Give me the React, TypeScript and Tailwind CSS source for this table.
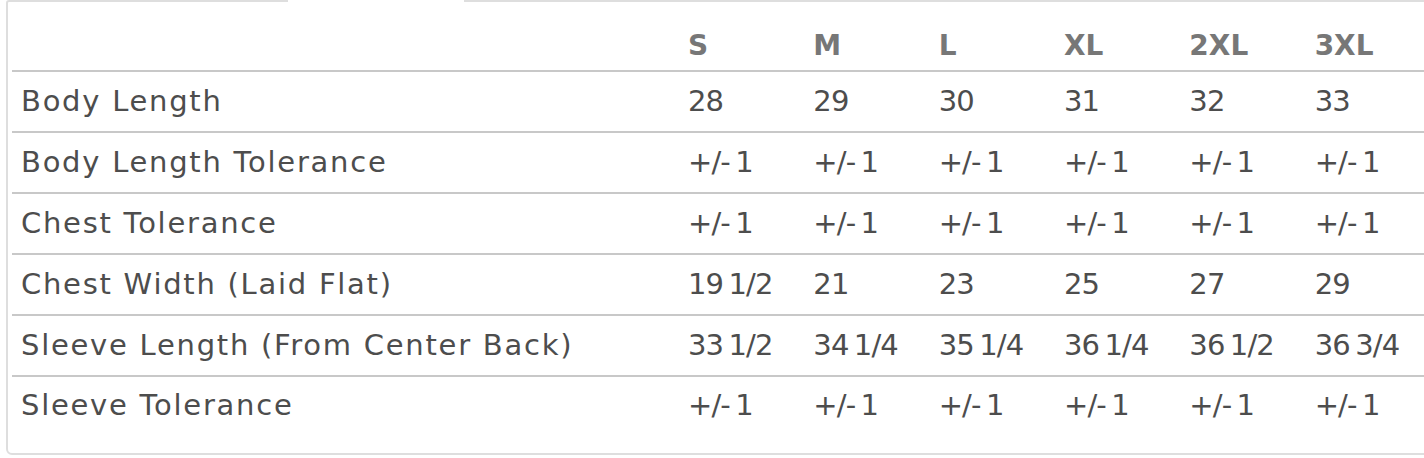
const sizes = ["S", "M", "L", "XL", "2XL", "3XL"];

const rows: { label: string; values: string[] }[] = [
  { label: "Body Length", values: ["28", "29", "30", "31", "32", "33"] },
  { label: "Body Length Tolerance", values: ["+/- 1", "+/- 1", "+/- 1", "+/- 1", "+/- 1", "+/- 1"] },
  { label: "Chest Tolerance", values: ["+/- 1", "+/- 1", "+/- 1", "+/- 1", "+/- 1", "+/- 1"] },
  { label: "Chest Width (Laid Flat)", values: ["19 1/2", "21", "23", "25", "27", "29"] },
  { label: "Sleeve Length (From Center Back)", values: ["33 1/2", "34 1/4", "35 1/4", "36 1/4", "36 1/2", "36 3/4"] },
  { label: "Sleeve Tolerance", values: ["+/- 1", "+/- 1", "+/- 1", "+/- 1", "+/- 1", "+/- 1"] },
];

const App: React.FC = () => {
  return (
    <div className="w-screen h-[458px] overflow-hidden bg-white font-['DejaVu_Sans',sans-serif]">
      {/* Size chart panel */}
      <div className="relative ml-[6px] w-[1440px] border-2 border-[#dedede] rounded-t-[3px] rounded-b-[6px] px-[4px] pb-[18px]">
        {/* active tab gap */}
        <div className="absolute top-[-2px] left-[280px] w-[176px] h-[2px] bg-white" />

        <table className="table-fixed w-[1418px] border-collapse text-[29px] text-[#4d4d4d]">
          <colgroup>
            <col className="w-[666px]" />
            {sizes.map((s) => (
              <col key={s} />
            ))}
          </colgroup>
          <thead>
            <tr className="h-[69px] border-b-2 border-[#c8c8c8]">
              <th />
              {sizes.map((s) => (
                <th
                  key={s}
                  className="align-bottom text-left pl-[10px] pb-[3px] text-[28px] font-bold text-[#777777]"
                >
                  {s}
                </th>
              ))}
            </tr>
          </thead>
          <tbody>
            {rows.map((r, i) => (
              <tr
                key={r.label}
                className={
                  i < rows.length - 1
                    ? "h-[61px] border-b-2 border-[#c8c8c8]"
                    : "h-[59px]"
                }
              >
                <td className="pl-[9px] align-middle whitespace-nowrap tracking-[0.06em]">
                  {r.label}
                </td>
                {r.values.map((v, j) => (
                  <td
                    key={j}
                    className="pl-[10px] align-middle whitespace-nowrap tracking-[-0.03em] [word-spacing:-3px]"
                  >
                    {v}
                  </td>
                ))}
              </tr>
            ))}
          </tbody>
        </table>
      </div>
    </div>
  );
};

export default App;
